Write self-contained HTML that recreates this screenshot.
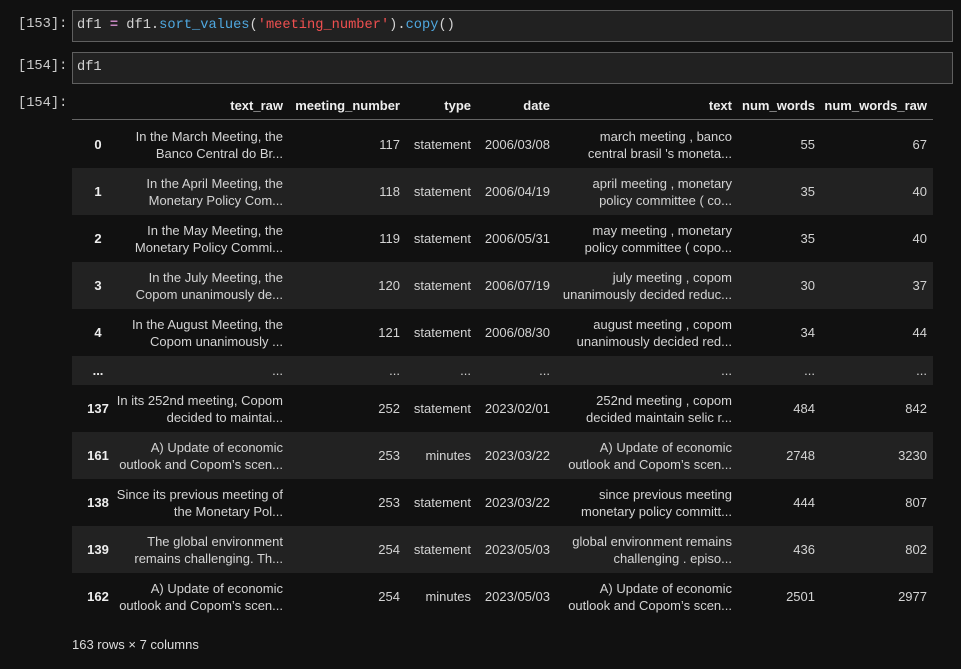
<!DOCTYPE html>
<html><head><meta charset="utf-8"><style>
body{margin:0;width:961px;height:669px;background:#111111;overflow:hidden;position:relative;font-family:"Liberation Sans",sans-serif;color:#d4d4d4}
.p{position:absolute;left:18px;font-family:"Liberation Mono",monospace;font-size:13.7px;color:#cccccc}
.box{position:absolute;left:72px;width:881px;height:32px;box-sizing:border-box;background:#212121;border:1px solid #5f5f5f;font-family:"Liberation Mono",monospace;font-size:13.7px;line-height:29px;padding-left:4px;color:#d4d4d4}
.row{position:absolute;left:72px;width:861px;font-size:13px;line-height:17px}
.row div{position:absolute;text-align:right;white-space:nowrap}
.s{background:#222222}
.h{font-weight:bold;color:#eee}
</style></head><body>
<div class="p" style="top:17px">[153]:</div>
<div class="box" style="top:10px">df1 <span style="color:#c586c0;font-weight:bold">=</span> df1.<span style="color:#4fa8e0">sort_values</span>(<span style="color:#f05050">'meeting_number'</span>).<span style="color:#4fa8e0">copy</span>()</div>
<div class="p" style="top:59px">[154]:</div>
<div class="box" style="top:52px">df1</div>
<div class="p" style="top:96px">[154]:</div>
<div id="t"></div>
<div style="position:absolute;left:72px;top:637px;font-size:13px;color:#ddd">163 rows × 7 columns</div>
<script>
const R=[283,400,471,550,732,815,927];
let h='<div class="row h" style="top:97px;height:22px;border-bottom:1px solid #666">';
["text_raw","meeting_number","type","date","text","num_words","num_words_raw"].forEach((t,i)=>h+=`<div style="right:${933-R[i]}px;top:0">${t}</div>`);
h+='</div>';
const d=[
["0","In the March Meeting, the<br>Banco Central do Br...","117","statement","2006/03/08","march meeting , banco<br>central brasil 's moneta...","55","67"],
["1","In the April Meeting, the<br>Monetary Policy Com...","118","statement","2006/04/19","april meeting , monetary<br>policy committee ( co...","35","40"],
["2","In the May Meeting, the<br>Monetary Policy Commi...","119","statement","2006/05/31","may meeting , monetary<br>policy committee ( copo...","35","40"],
["3","In the July Meeting, the<br>Copom unanimously de...","120","statement","2006/07/19","july meeting , copom<br>unanimously decided reduc...","30","37"],
["4","In the August Meeting, the<br>Copom unanimously ...","121","statement","2006/08/30","august meeting , copom<br>unanimously decided red...","34","44"],
["...","...","...","...","...","...","...","..."],
["137","In its 252nd meeting, Copom<br>decided to maintai...","252","statement","2023/02/01","252nd meeting , copom<br>decided maintain selic r...","484","842"],
["161","A) Update of economic<br>outlook and Copom’s scen...","253","minutes","2023/03/22","A) Update of economic<br>outlook and Copom’s scen...","2748","3230"],
["138","Since its previous meeting of<br>the Monetary Pol...","253","statement","2023/03/22","since previous meeting<br>monetary policy committ...","444","807"],
["139","The global environment<br>remains challenging. Th...","254","statement","2023/05/03","global environment remains<br>challenging . episo...","436","802"],
["162","A) Update of economic<br>outlook and Copom’s scen...","254","minutes","2023/05/03","A) Update of economic<br>outlook and Copom’s scen...","2501","2977"]];
let y=121;
d.forEach((r,k)=>{const e=r[0]=="...";const H=e?29:47;
h+=`<div class="row${k%2?' s':''}" style="top:${y}px;height:${H}px">`;
h+=`<div class="h" style="left:0;width:52px;text-align:center;top:${H/2-9}px">${r[0]}</div>`;
for(let i=1;i<8;i++){const two=r[i].includes('<br>');h+=`<div style="right:${933-R[i-1]}px;top:${two?H/2-17:H/2-9}px">${r[i]}</div>`;}
h+='</div>';y+=H;});
document.getElementById('t').innerHTML=h;
</script>
</body></html>
